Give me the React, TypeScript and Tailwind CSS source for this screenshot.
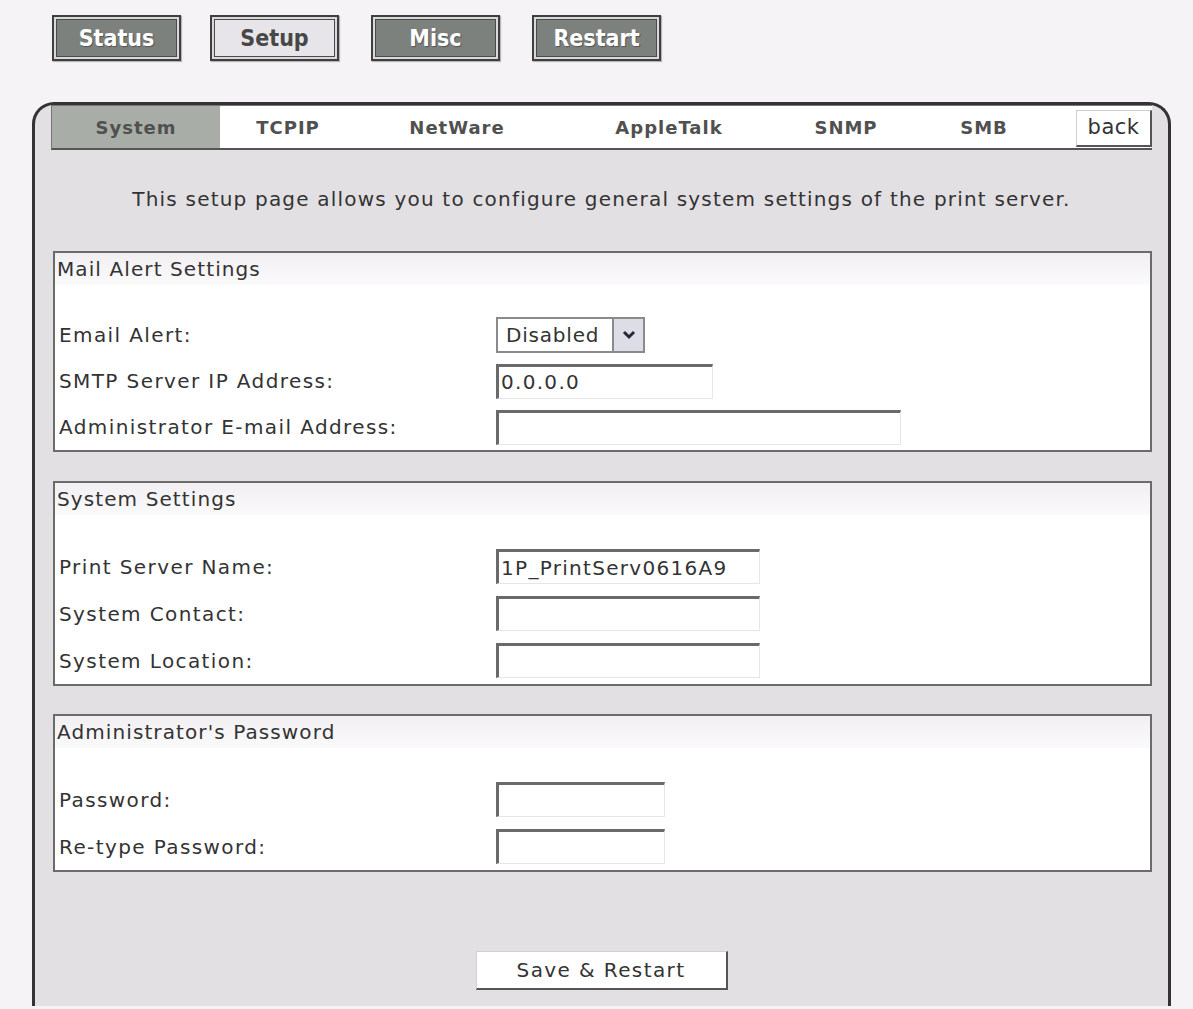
import React from "react";

const FONT = { fontFamily: '"DejaVu Sans", Verdana, Tahoma, sans-serif' };
const COND = { fontFamily: '"DejaVu Sans Condensed", "DejaVu Sans", Tahoma, sans-serif' };

function TopButton({ label, active, ml }: { label: string; active?: boolean; ml: string }) {
  return (
    <div className={`${ml} w-[129px] h-[46px] border-2 border-[#3f3f3f] bg-[#d9d9d9] p-[2px] shadow-[1px_1px_1px_rgba(0,0,0,0.25)]`}>
      <div
        style={COND}
        className={`h-full w-full border border-[#4a4a4a] flex items-center justify-center text-[23px] font-bold ${
          active ? "bg-[#e7e5e9] text-[#474747]" : "bg-[#7d817e] text-white [text-shadow:1px_1px_1px_rgba(0,0,0,0.35)]"
        }`}
      >
        {label}
      </div>
    </div>
  );
}

function Input({ w, value }: { w: string; value?: string }) {
  return (
    <div
      className={`${w} h-[35px] bg-white border-t-[3px] border-l-[3px] border-t-[#6a6a6a] border-l-[#6a6a6a] border-r border-b border-r-[#e6e6e6] border-b-[#e6e6e6] flex items-center pl-[2px] text-[20px] tracking-[1.3px] text-[#333]`}
    >
      {value}
    </div>
  );
}

function Select() {
  return (
    <div className="w-[149px] h-[36px] bg-white border-2 border-[#8a8a8a] flex items-center">
      <div className="flex-1 pl-[8px] text-[20px] tracking-[0.8px] text-[#333]">Disabled</div>
      <div className="w-[31px] h-full bg-[#dcdde6] border-l-2 border-[#8a8a8a] flex items-center justify-center">
        <svg width="14" height="10" viewBox="0 0 14 10">
          <path d="M2 2 L7 7 L12 2" fill="none" stroke="#23283a" strokeWidth="3" />
        </svg>
      </div>
    </div>
  );
}

type Row = { label: string; field: React.ReactNode };

function Section({ title, rows, rowH, pt }: { title: string; rows: Row[]; rowH: string; pt: string }) {
  return (
    <div className="border-2 border-[#6b6b6b] bg-white">
      <div className="h-[32px] bg-gradient-to-b from-[#f1eff2] to-[#fbfafb] pl-[2px] flex items-center text-[20px] tracking-[1.1px] text-[#333]">
        {title}
      </div>
      <div className={pt}>
        {rows.map((r) => (
          <div key={r.label} className={`${rowH} grid grid-cols-[437px_1fr] items-center pl-[4px]`}>
            <div className="text-[20px] tracking-[1.4px] text-[#333]">{r.label}</div>
            <div>{r.field}</div>
          </div>
        ))}
      </div>
    </div>
  );
}

const tabs: { label: string; w: string }[] = [
  { label: "System", w: "w-[168px]" },
  { label: "TCPIP", w: "w-[136px]" },
  { label: "NetWare", w: "w-[202px]" },
  { label: "AppleTalk", w: "w-[222px]" },
  { label: "SNMP", w: "w-[132px]" },
  { label: "SMB", w: "w-[144px]" },
];

export default function App() {
  return (
    <div className="w-[1193px] h-[1009px] overflow-hidden bg-[#f5f3f6]" style={FONT}>
      <div className="flex pt-[15px]">
        <TopButton label="Status" ml="ml-[52px]" />
        <TopButton label="Setup" active ml="ml-[29px]" />
        <TopButton label="Misc" ml="ml-[32px]" />
        <TopButton label="Restart" ml="ml-[32px]" />
      </div>

      <div className="mt-[41px] ml-[32px] w-[1139px] h-[904px] border-[3px] border-b-0 border-[#333] rounded-t-[22px] bg-[#e2e0e3] px-[16px] pt-0">
        <div className="flex h-[45px] border-t border-l border-[#777] border-b-2 border-b-[#555] bg-white">
          {tabs.map((t, i) => (
            <div
              key={t.label}
              className={`${t.w} h-full flex items-center justify-center text-[18px] font-bold tracking-[1px] text-[#505050] ${
                i === 0 ? "bg-[#a8ada7]" : ""
              }`}
            >
              {t.label}
            </div>
          ))}
          <div className="flex-1" />
          <div className="w-[76px] mt-[4px] mb-[1px] bg-white border-l border-t border-[#cfcfcf] border-r-2 border-r-[#555] border-b-2 border-b-[#555] flex items-center justify-center text-[21px] text-[#333] tracking-[0.5px]">
            back
          </div>
        </div>

        <div className="h-[101px] pb-[4px] flex items-center justify-center text-[20px] tracking-[1.2px] text-[#333]">
          This setup page allows you to configure general system settings of the print server.
        </div>

        <div className="pl-[2px]">
          <Section
            title="Mail Alert Settings"
            rowH="h-[46px]"
            pt="pt-[27px]"
            rows={[
              { label: "Email Alert:", field: <Select /> },
              { label: "SMTP Server IP Address:", field: <Input w="w-[217px]" value="0.0.0.0" /> },
              { label: "Administrator E-mail Address:", field: <Input w="w-[405px]" /> },
            ]}
          />
          <div className="h-[29px]" />
          <Section
            title="System Settings"
            rowH="h-[47px]"
            pt="pt-[28px]"
            rows={[
              { label: "Print Server Name:", field: <Input w="w-[264px]" value="1P_PrintServ0616A9" /> },
              { label: "System Contact:", field: <Input w="w-[264px]" /> },
              { label: "System Location:", field: <Input w="w-[264px]" /> },
            ]}
          />
          <div className="h-[28px]" />
          <Section
            title="Administrator's Password"
            rowH="h-[47px]"
            pt="pt-[28px]"
            rows={[
              { label: "Password:", field: <Input w="w-[169px]" /> },
              { label: "Re-type Password:", field: <Input w="w-[169px]" /> },
            ]}
          />
        </div>

        <div className="flex justify-center pt-[79px]">
          <div className="w-[252px] h-[39px] bg-white border-l border-t border-[#cfcfcf] border-r-2 border-r-[#555] border-b-2 border-b-[#555] flex items-center justify-center text-[20px] tracking-[1.4px] text-[#333]">
            Save &amp; Restart
          </div>
        </div>
      </div>
    </div>
  );
}
